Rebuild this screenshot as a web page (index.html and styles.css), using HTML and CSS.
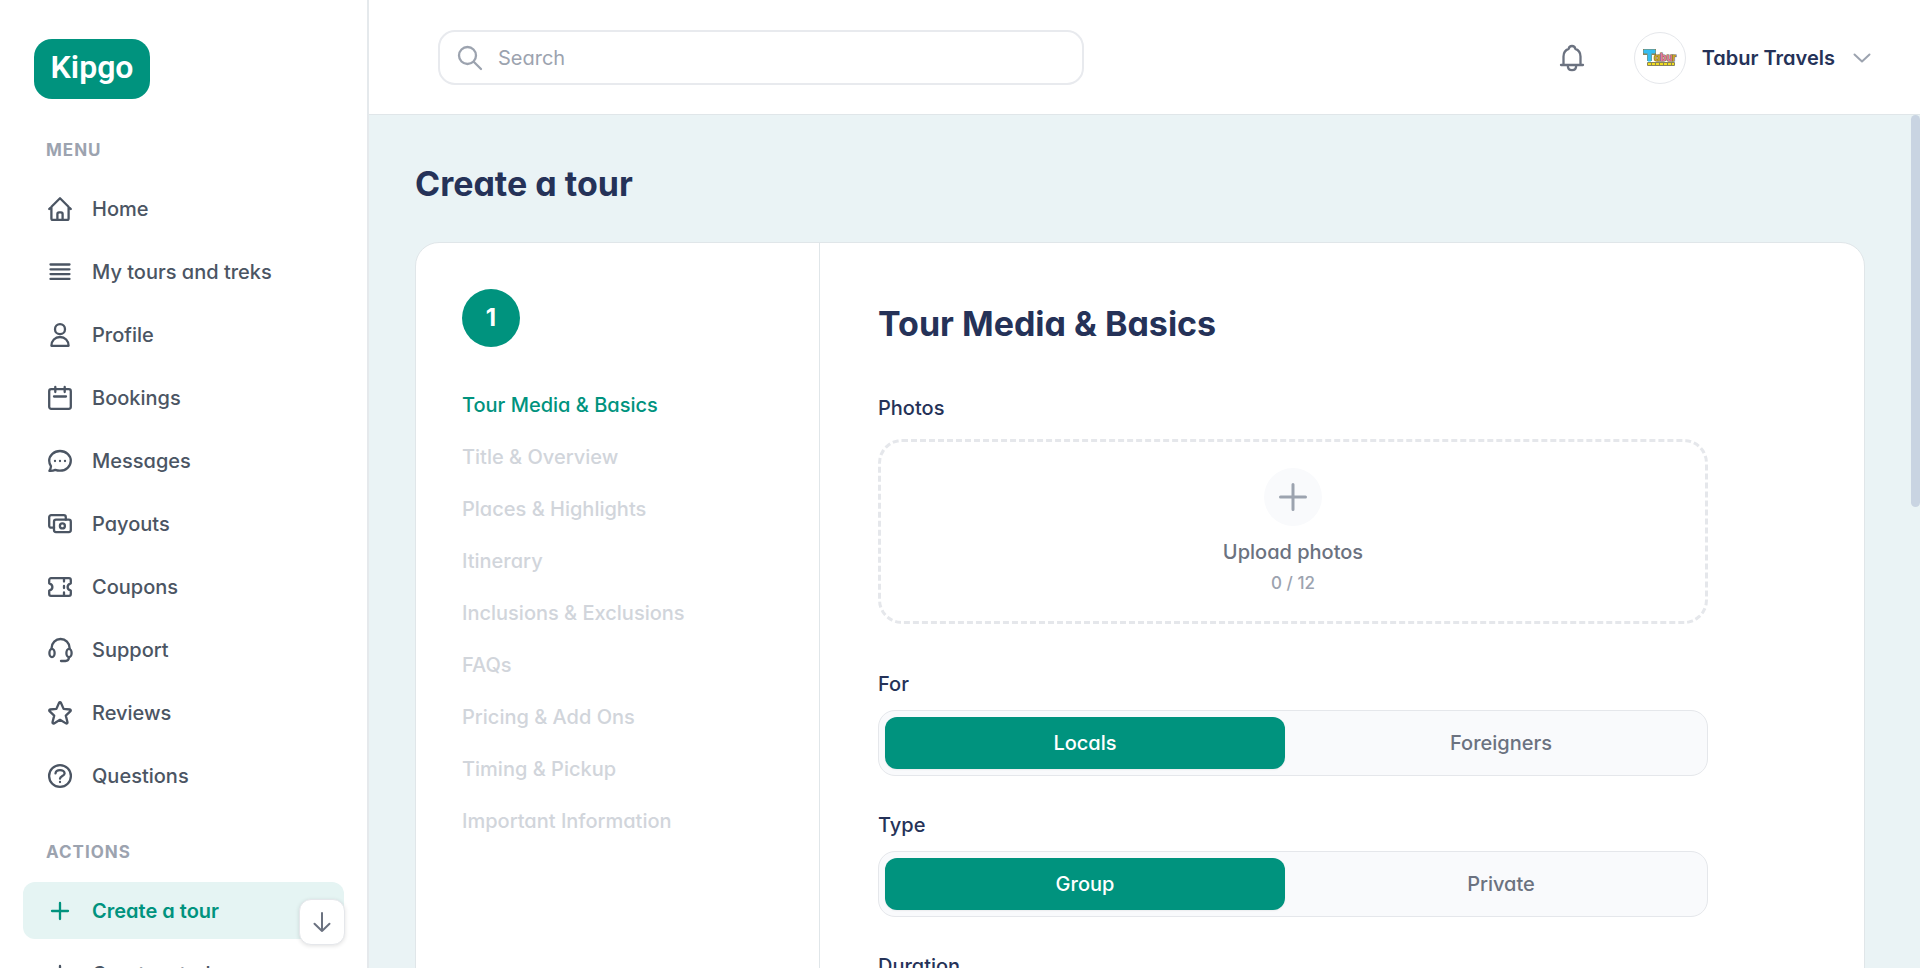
FILE: index.html
```html
<!DOCTYPE html>
<html lang="en">

<head>
    <meta charset="utf-8">
    <meta name="viewport" content="width=device-width, initial-scale=1.0">
    <title>Kipgo - Create a tour</title>
    <link rel="stylesheet" href="styles.css">
</head>

<body>
    <aside class="sidebar">
        <a href="#" class="logo">Kipgo</a>

        <nav>
            <h2 class="nav-title">MENU</h2>
            <ul class="nav-list">
                <li><a href="#" class="nav-link">
                    <svg class="icon" viewBox="0 0 24 24"><path d="M1.2 12 12 1.2 22.8 12M3.4 10v11.4a1.4 1.4 0 0 0 1.4 1.4h14.4a1.4 1.4 0 0 0 1.4-1.4V10M9.4 22.5v-5.6a1.6 1.6 0 0 1 1.6-1.6h2a1.6 1.6 0 0 1 1.6 1.6v5.6"/></svg>
                    Home</a></li>
                <li><a href="#" class="nav-link">
                    <svg class="icon" viewBox="0 0 24 24"><path d="M2.5 4.5h19M2.5 9.3h19M2.5 14.1h19M2.5 18.9h19"/></svg>
                    My tours and treks</a></li>
                <li><a href="#" class="nav-link">
                    <svg class="icon" viewBox="0 0 24 24"><circle cx="12" cy="6.2" r="5"/><path d="M3.4 22.8c0-5.2 3.6-8.8 8.6-8.8s8.6 3.6 8.6 8.8z"/></svg>
                    Profile</a></li>
                <li><a href="#" class="nav-link">
                    <svg class="icon" viewBox="0 0 24 24"><rect x="1.2" y="3.2" width="21.6" height="19.6" rx="2"/><path d="M7.3 1v5M16.7 1v5M6 10.5h12"/></svg>
                    Bookings</a></li>
                <li><a href="#" class="nav-link">
                    <svg class="icon" viewBox="0 0 24 24"><path d="M12 2c6 0 10.8 4.3 10.8 9.8S18 21.7 12 21.7c-1.700 0-3.300-.3-4.700-.8-1.800.8-3.700 1.100-5.900.9.800-1.200 1.500-2.700 1.600-4.500-1.200-1.600-1.800-3.500-1.800-5.500C1.200 6.300 6 2 12 2z"/><path d="M7 12h.01M12 12h.01M17 12h.01"/></svg>
                    Messages</a></li>
                <li><a href="#" class="nav-link">
                    <svg class="icon" viewBox="0 0 24 24"><rect x="6" y="7.7" width="16.8" height="12.4" rx="2"/><circle cx="14.4" cy="13.9" r="2.5"/><path d="M6 15.7H3.2a2 2 0 0 1-2-2V5.2a2 2 0 0 1 2-2h12.6a2 2 0 0 1 2 2v2.5"/></svg>
                    Payouts</a></li>
                <li><a href="#" class="nav-link">
                    <svg class="icon" viewBox="0 0 24 24"><path d="M3 3.2h18A1.8 1.8 0 0 1 22.8 5v3.3c-2 .6-3.2 1.9-3.2 3.700s1.200 3.100 3.200 3.700V19a1.800 1.800 0 0 1-1.800 1.800H3A1.800 1.800 0 0 1 1.200 19v-3.300c2-.6 3.200-1.900 3.200-3.700S3.200 8.900 1.200 8.300V5A1.800 1.800 0 0 1 3 3.200z"/><path d="M16 4v2.500M16 11v2M16 17.500V20"/></svg>
                    Coupons</a></li>
                <li><a href="#" class="nav-link">
                    <svg class="icon" viewBox="0 0 24 24"><path d="M3.6 11V10a9 9 0 0 1 18 0v1M21 19.500c-.2 2.300-1.500 3.500-3.500 3.500H13"/><ellipse cx="4" cy="15" rx="2.6" ry="4.200"/><ellipse cx="21" cy="15" rx="2.6" ry="4.200"/></svg>
                    Support</a></li>
                <li><a href="#" class="nav-link">
                    <svg class="icon" viewBox="0 0 24 24"><path d="M11.100 1.800a1 1 0 0 1 1.800 0l2.700 6.100 6.300.6a1 1 0 0 1 .6 1.700l-4.700 4.400 1.700 6.700a1 1 0 0 1-1.500 1.100L12 18.800l-6 3.600a1 1 0 0 1-1.500-1.100l1.700-6.700-4.700-4.400a1 1 0 0 1 .6-1.700l6.300-.6z"/></svg>
                    Reviews</a></li>
                <li><a href="#" class="nav-link">
                    <svg class="icon" viewBox="0 0 24 24"><circle cx="12" cy="12" r="10.9"/><path d="M7.500 9.300c.3-2 2.100-3.200 4.500-3.200s4.600 1.300 4.600 3.300c0 2.500-4.600 2.700-4.600 5.300M12 18h.01"/></svg>
                    Questions</a></li>
            </ul>

            <h2 class="nav-title">ACTIONS</h2>
            <ul class="nav-list">
                <li><a href="#" class="nav-link active">
                    <svg class="icon" viewBox="0 0 24 24"><path d="M12 4v16M4 12h16"/></svg>
                    Create a tour</a></li>
                <li><a href="#" class="nav-link">
                    <svg class="icon" viewBox="0 0 24 24"><path d="M12 4v16M4 12h16"/></svg>
                    Create a trek</a></li>
            </ul>
        </nav>

        <button class="scroll-down" aria-label="Scroll down">
            <svg class="icon" viewBox="0 0 24 24"><path d="M12 3v18M4.5 13.8 12 21l7.5-7.2"/></svg>
        </button>
    </aside>

    <div class="page">
        <header class="topbar">
            <label class="search">
                <svg class="icon" viewBox="0 0 24 24"><circle cx="9.5" cy="9.5" r="8.5"/><path d="m15.7 15.7 7.3 7.3"/></svg>
                <input type="search" placeholder="Search" aria-label="Search">
            </label>

            <div class="account">
                <button class="bell" aria-label="Notifications">
                    <svg class="icon" viewBox="0 0 24 26"><path d="M1 20h22M3.500 20V11.500c0-3.300 1.800-6.500 5.200-7.700C9 2.200 10.200 1 12 1s3 1.200 3.300 2.800c3.400 1.200 5.200 4.400 5.200 7.700V20M7.800 20.500c0 2.800 1.700 4.700 4.200 4.700s4.200-1.900 4.200-4.700"/></svg>
                </button>
                <button class="user">
                    <span class="avatar">
                        <svg viewBox="0 0 34 18">
                            <g class="avatar-shadow"><path d="M0 0h13v6H9v6H4V6H0z"/><rect x="4" y="13" width="28" height="4" rx="1"/></g>
                            <path class="avatar-t" d="M1 1h11v3H8v8H5V4H1z"/>
                            <text class="avatar-olive" x="11" y="12">a</text>
                            <text class="avatar-pink" x="17" y="12">bu</text>
                            <text class="avatar-olive" x="29" y="12">r</text>
                            <path class="avatar-band" d="M5 15h26"/>
                        </svg>
                    </span>
                    Tabur Travels
                    <svg class="chevron" viewBox="0 0 18 18"><path d="m1.5 5.5 7.5 7 7.5-7"/></svg>
                </button>
            </div>
        </header>

        <div class="scroller">
            <main>
                <h1>Create a tour</h1>

                <div class="card">
                    <section class="steps">
                        <span class="step-number">1</span>
                        <ol class="step-list">
                            <li class="current">Tour Media &amp; Basics</li>
                            <li>Title &amp; Overview</li>
                            <li>Places &amp; Highlights</li>
                            <li>Itinerary</li>
                            <li>Inclusions &amp; Exclusions</li>
                            <li>FAQs</li>
                            <li>Pricing &amp; Add Ons</li>
                            <li>Timing &amp; Pickup</li>
                            <li>Important Information</li>
                        </ol>
                    </section>

                    <form class="tour-form">
                        <h2>Tour Media &amp; Basics</h2>

                        <div class="photos">
                            <label for="photos" class="field-label">Photos</label>
                            <label class="upload">
                                <input type="file" id="photos" class="hidden-input" multiple>
                                <span class="upload-plus">
                                    <svg class="icon" viewBox="0 0 28 28"><path d="M14 1.5v25M1.5 14h25"/></svg>
                                </span>
                                <span class="upload-text">Upload photos</span>
                                <span class="upload-count">0 / 12</span>
                            </label>
                        </div>

                        <fieldset>
                            <legend class="field-label">For</legend>
                            <div class="segment">
                                <label><input type="radio" name="for" class="hidden-input" checked><span>Locals</span></label>
                                <label><input type="radio" name="for" class="hidden-input"><span>Foreigners</span></label>
                            </div>
                        </fieldset>

                        <fieldset>
                            <legend class="field-label">Type</legend>
                            <div class="segment">
                                <label><input type="radio" name="type" class="hidden-input" checked><span>Group</span></label>
                                <label><input type="radio" name="type" class="hidden-input"><span>Private</span></label>
                            </div>
                        </fieldset>

                        <fieldset>
                            <legend class="field-label">Duration</legend>
                        </fieldset>
                    </form>
                </div>
            </main>
            <div class="scrollbar"><div class="thumb"></div></div>
        </div>
    </div>
</body>

</html>
```

FILE: styles.css
```css
* {
    box-sizing: border-box;
    margin: 0;
    padding: 0;
}

body {
    display: flex;
    height: 100vh;
    overflow: hidden;
    background-color: #eaf3f5;
    color: #253258;
    font-family: Inter, sans-serif;
    font-feature-settings: "cv11";
    font-size: 20px;
    line-height: 28px;
}

ul,
ol {
    list-style: none;
}

a {
    color: inherit;
    text-decoration: none;
}

button,
input {
    font: inherit;
    font-feature-settings: inherit;
    color: inherit;
    background: none;
    border: none;
}

button {
    cursor: pointer;
}

fieldset {
    border: none;
}

.icon,
.chevron {
    flex: none;
    width: 24px;
    height: 24px;
    overflow: visible;
    fill: none;
    stroke: currentColor;
    stroke-width: 2.3;
    stroke-linecap: round;
    stroke-linejoin: round;
}

.hidden-input {
    position: absolute;
    opacity: 0;
    width: 1px;
    height: 1px;
}

/* sidebar */

.sidebar {
    position: relative;
    flex: none;
    width: 369px;
    height: 100%;
    padding: 39px 23px 0;
    overflow: hidden;
    background-color: white;
    border-right: 2px solid #e5e9ec;
}

.logo {
    display: block;
    width: 116px;
    margin: 0 0 3px 11px;
    padding: 8px 0 12px;
    border-radius: 18px;
    background-color: #00937e;
    color: white;
    font-family: Roboto, sans-serif;
    font-size: 32px;
    font-weight: 600;
    line-height: 40px;
    text-align: center;
}

.nav-title {
    padding: 34px 23px 16px;
    color: #9ca3af;
    font-size: 17px;
    font-weight: 700;
    letter-spacing: 1px;
}

.nav-list {
    display: flex;
    flex-direction: column;
    gap: 6px;
}

.nav-link {
    display: flex;
    align-items: center;
    gap: 20px;
    height: 57px;
    padding-left: 25px;
    border-radius: 12px;
    color: #4b5563;
    font-weight: 500;
}

.nav-link.active {
    background-color: #e5f4f3;
    color: #00937e;
    font-weight: 600;
}

.scroll-down {
    position: absolute;
    right: 22px;
    bottom: 23px;
    display: flex;
    align-items: center;
    justify-content: center;
    width: 46px;
    height: 46px;
    border: 1px solid #e5e7eb;
    border-radius: 12px;
    background-color: white;
    color: #6b7280;
    box-shadow: 0 1px 4px rgba(0, 0, 0, 0.12);
}

.scroll-down .icon {
    stroke-width: 2;
}

/* top bar */

.page {
    display: flex;
    flex: 1;
    flex-direction: column;
    min-width: 0;
}

.topbar {
    display: flex;
    flex: none;
    align-items: center;
    justify-content: space-between;
    height: 115px;
    padding: 1px 49px 0 69px;
    background-color: white;
    border-bottom: 1px solid #e0e6e9;
}

.search {
    display: flex;
    align-items: center;
    gap: 16px;
    width: 646px;
    height: 55px;
    padding: 0 18px;
    border: 2px solid #e8eaee;
    border-radius: 17px;
    color: #9ca3af;
}

.search input {
    flex: 1;
    outline: none;
}

.search input::placeholder {
    color: #9ca3af;
    opacity: 1;
}

.account {
    display: flex;
    align-items: center;
    gap: 50px;
}

.bell {
    color: #6b7280;
}

.bell .icon {
    display: block;
    height: 26px;
}

.user {
    display: flex;
    align-items: center;
    font-weight: 600;
}

.avatar {
    display: flex;
    align-items: center;
    justify-content: center;
    width: 52px;
    height: 52px;
    margin-right: 16px;
    border: 1px solid #e5e7eb;
    border-radius: 50%;
}

.avatar svg {
    width: 34px;
    height: 18px;
}

.avatar text {
    font-size: 10px;
    font-weight: 800;
    stroke: #6b5a2e;
    stroke-width: 1;
    paint-order: stroke;
}

.avatar-shadow {
    fill: #8a8457;
}

.avatar-t {
    fill: #35bdf2;
    stroke: #35bdf2;
}

.avatar-pink {
    fill: #e07aa0;
}

.avatar-olive {
    fill: #c9a62a;
}

.avatar-band {
    stroke: #f0dc1e;
    stroke-width: 2;
    stroke-dasharray: 3 1;
}

.chevron {
    width: 18px;
    height: 18px;
    margin-left: 18px;
    color: #9ca3af;
    stroke-width: 2;
}

/* content */

.scroller {
    display: flex;
    flex: 1;
    min-height: 0;
    overflow: hidden;
}

main {
    flex: 1;
    padding: 46px;
}

.scrollbar {
    flex: none;
    width: 9px;
}

.thumb {
    height: 46%;
    border-radius: 5px;
    background-color: #c9d4e2;
}

h1,
.tour-form h2 {
    font-size: 34px;
    font-weight: 700;
    line-height: 46px;
}

.card {
    display: flex;
    margin-top: 35px;
    border: 1px solid #e0e6e9;
    border-radius: 24px;
    background-color: white;
}

.steps {
    flex: none;
    width: 404px;
    padding: 46px;
    border-right: 1px solid #e0e6e9;
}

.step-number {
    display: flex;
    align-items: center;
    justify-content: center;
    width: 58px;
    height: 58px;
    border-radius: 50%;
    background-color: #00937e;
    color: white;
    font-size: 24px;
    font-weight: 700;
}

.step-list {
    display: flex;
    flex-direction: column;
    gap: 24px;
    margin-top: 44px;
    color: #d1d5db;
    font-weight: 500;
}

.step-list .current {
    color: #00937e;
}

.tour-form {
    flex: 1;
    max-width: 946px;
    padding: 58px;
}

.field-label {
    display: block;
    font-weight: 500;
}

.photos {
    margin: 47px 0 46px;
}

.upload {
    display: flex;
    flex-direction: column;
    align-items: center;
    height: 185px;
    margin-top: 17px;
    padding-top: 26px;
    border: 3px dashed #e5e7eb;
    border-radius: 24px;
    cursor: pointer;
}

.upload-plus {
    display: flex;
    align-items: center;
    justify-content: center;
    width: 58px;
    height: 58px;
    border-radius: 50%;
    background-color: #f9fafc;
    color: #9ca3af;
}

.upload-plus .icon {
    width: 28px;
    height: 28px;
    stroke-width: 3;
}

.upload-text {
    margin-top: 12px;
    color: #6b7280;
    font-weight: 500;
}

.upload-count {
    margin-top: 3px;
    color: #9ca3af;
    font-size: 17px;
    font-weight: 500;
}

.segment {
    display: grid;
    grid-template-columns: 1fr 1fr;
    gap: 16px;
    margin: 12px 0 35px;
    padding: 6px;
    border: 1px solid #e5e7eb;
    border-radius: 17px;
    background-color: #f9fafc;
}

.segment span {
    display: block;
    padding: 12px;
    border-radius: 12px;
    color: #6b7280;
    font-weight: 500;
    text-align: center;
    cursor: pointer;
}

.segment input:checked + span {
    background-color: #00937e;
    color: white;
    box-shadow: 0 1px 2px rgba(0, 0, 0, 0.06);
}
```
